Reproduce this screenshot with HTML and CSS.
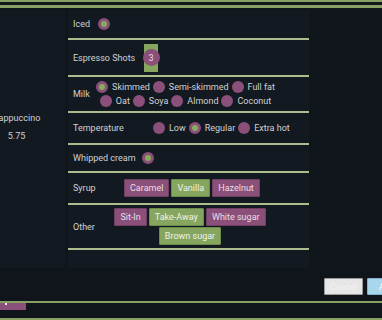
FILE: index.html
```html
<!DOCTYPE html>
<html lang="en">
  <head>
    <meta charset="UTF-8" />
    <meta name="viewport" content="width=device-width, initial-scale=1.0" />
    <title>Order</title>
    <link rel="stylesheet" href="styles.css">
  </head>
  <body>
    <div class="b-page">
      <div class="b-topbar"></div>

      <div class="b-layout">
        <div class="b-drink">
          <p class="b-drink__name">Cappuccino</p>
          <p class="b-drink__price">5.75</p>
        </div>

        <div class="b-options">
          <div class="b-row b-row_iced">
            <span class="b-row__label">Iced</span>
            <div class="b-row__values">
              <span class="b-radio"><span class="b-radio__dot b-radio__dot_on"></span></span>
            </div>
          </div>

          <div class="b-row b-row_shots">
            <span class="b-row__label">Espresso Shots</span>
            <div class="b-row__values">
              <div class="b-stepper"><span class="b-stepper__value">3</span></div>
            </div>
          </div>

          <div class="b-row b-row_milk">
            <span class="b-row__label">Milk</span>
            <div class="b-row__values b-row__values_wrap">
              <div class="b-line">
                <span class="b-radio"><span class="b-radio__dot b-radio__dot_on"></span>Skimmed</span>
                <span class="b-radio"><span class="b-radio__dot"></span>Semi-skimmed</span>
                <span class="b-radio"><span class="b-radio__dot"></span>Full fat</span>
              </div>
              <div class="b-line">
                <span class="b-radio"><span class="b-radio__dot"></span>Oat</span>
                <span class="b-radio"><span class="b-radio__dot"></span>Soya</span>
                <span class="b-radio"><span class="b-radio__dot"></span>Almond</span>
                <span class="b-radio"><span class="b-radio__dot"></span>Coconut</span>
              </div>
            </div>
          </div>

          <div class="b-row b-row_temp">
            <span class="b-row__label">Temperature</span>
            <div class="b-row__values">
              <span class="b-radio"><span class="b-radio__dot"></span>Low</span>
              <span class="b-radio"><span class="b-radio__dot b-radio__dot_on"></span>Regular</span>
              <span class="b-radio"><span class="b-radio__dot"></span>Extra hot</span>
            </div>
          </div>

          <div class="b-row b-row_cream">
            <span class="b-row__label">Whipped cream</span>
            <div class="b-row__values">
              <span class="b-radio"><span class="b-radio__dot b-radio__dot_on"></span></span>
            </div>
          </div>

          <div class="b-row b-row_syrup">
            <span class="b-row__label">Syrup</span>
            <div class="b-row__values">
              <span class="b-chip">Caramel</span>
              <span class="b-chip b-chip_on">Vanilla</span>
              <span class="b-chip">Hazelnut</span>
            </div>
          </div>

          <div class="b-row b-row_other">
            <span class="b-row__label">Other</span>
            <div class="b-row__values b-row__values_wrap">
              <div class="b-line b-line_chips">
                <span class="b-chip">Sit-In</span>
                <span class="b-chip b-chip_on">Take-Away</span>
                <span class="b-chip">White sugar</span>
              </div>
              <div class="b-line b-line_chips">
                <span class="b-chip b-chip_on">Brown sugar</span>
              </div>
            </div>
          </div>
        </div>
      </div>

      <div class="b-actions">
        <button class="b-actions__button b-actions__button_light">Cancel</button>
        <button class="b-actions__button b-actions__button_blue">Add</button>
      </div>

      <div class="b-footer">
        <span class="b-footer__tab"></span>
      </div>
    </div>
  </body>
</html>
```

FILE: styles.css
```css
body
{
	margin: 0;
	overflow: hidden;
	background-color: #10151b;
	color: #cfd3d6;
	font-family: Roboto, "Liberation Sans", sans-serif;
	font-size: 9px;
}

p
{
	margin: 0;
}

.b-page
{
	width: 412px;
}

.b-topbar
{
	height: 3px;
	border-top: 2px solid #87a064;
	border-bottom: 3px solid #87a064;
}

.b-layout
{
	display: flex;
	gap: 3px;
	margin-top: 2px;
	height: 258px;
}

.b-drink
{
	width: 33px;
	padding-right: 32px;
	padding-top: 102px;
	background-color: #131920;
	display: flex;
	flex-direction: column;
	align-items: center;
	gap: 6px;
	white-space: nowrap;
}

.b-drink__name, .b-drink__price
{
	line-height: 12px;
}

.b-options
{
	width: 241px;
	background-color: #131920;
}

.b-row
{
	display: flex;
	align-items: center;
	padding: 0 5px;
	border-bottom: 2px solid #a9be8c;
	white-space: nowrap;
}

.b-row__label
{
	flex: none;
}

.b-row__values
{
	display: flex;
	align-items: center;
}

.b-row__values_wrap
{
	flex-direction: column;
	align-items: stretch;
}

.b-row_iced { height: 28px; }
.b-row_iced .b-row__label { width: 25px; }

.b-row_shots { height: 35px; }
.b-row_shots .b-row__label { width: 71px; }

.b-row_milk { height: 34px; }
.b-row_milk .b-row__label { width: 22px; }
.b-row_milk .b-row__values { width: 181px; }

.b-row_temp { height: 30px; }
.b-row_temp .b-row__label { width: 80px; }

.b-row_cream { height: 26px; }
.b-row_cream .b-row__label { width: 69px; }

.b-row_syrup { height: 30px; }
.b-row_syrup .b-row__label { width: 51px; }
.b-row_syrup .b-row__values { gap: 2px; }

.b-row_other { height: 43px; }
.b-row_other .b-row__label { width: 35px; }
.b-row_other .b-row__values { width: 164px; gap: 1px; }

.b-line
{
	display: flex;
	justify-content: center;
	align-items: center;
	height: 14px;
}

.b-line_chips
{
	height: auto;
	gap: 2px;
}

.b-radio
{
	display: inline-flex;
	align-items: center;
	gap: 4px;
	margin-right: 3px;
}

.b-radio:last-child
{
	margin-right: 0;
}

.b-radio__dot
{
	width: 12px;
	height: 12px;
	border-radius: 50%;
	background-color: #8a5079;
	box-sizing: border-box;
}

.b-radio__dot_on
{
	border: 3px solid #8a5079;
	background-color: #86ad5c;
}

.b-stepper
{
	width: 14px;
	height: 28px;
	background-color: #86a660;
	display: flex;
	align-items: center;
	justify-content: center;
}

.b-stepper__value
{
	flex: none;
	width: 17px;
	height: 17px;
	border-radius: 50%;
	background-color: #8a5079;
	color: #eadfe7;
	display: flex;
	align-items: center;
	justify-content: center;
}

.b-chip
{
	display: inline-block;
	height: 16px;
	line-height: 16px;
	padding: 0 5px;
	border: 1px solid #6f3e62;
	border-radius: 1px;
	background-color: #8a5079;
	color: #eadfe7;
}

.b-chip_on
{
	border-color: #6c8a4b;
	background-color: #86a660;
	color: #eef2e8;
}

.b-actions
{
	display: flex;
	justify-content: flex-end;
	gap: 4px;
	padding-right: 5px;
	margin-top: 10px;
}

.b-actions__button
{
	height: 17px;
	width: 39px;
	padding: 0;
	border: 1px solid #9a9a9a;
	border-radius: 1px;
	font-family: Roboto, "Liberation Sans", sans-serif;
	font-size: 9px;
}

.b-actions__button_light
{
	background-color: #e6e6e6;
	color: #f2f2f2;
}

.b-actions__button_blue
{
	width: 40px;
	border-color: #7fb3cc;
	background-color: #a8d6ec;
	color: #ffffff;
}

.b-footer
{
	margin-top: 6px;
	height: 15px;
	border-top: 2px solid #87a064;
	border-bottom: 2px solid #87a064;
}

.b-footer__tab
{
	display: block;
	position: relative;
	width: 26px;
	height: 7px;
	background-color: #8a5079;
}

.b-footer__tab::before
{
	content: "";
	position: absolute;
	left: 5px;
	top: 0;
	width: 2px;
	height: 2px;
	background-color: #e8e8e8;
}
```
